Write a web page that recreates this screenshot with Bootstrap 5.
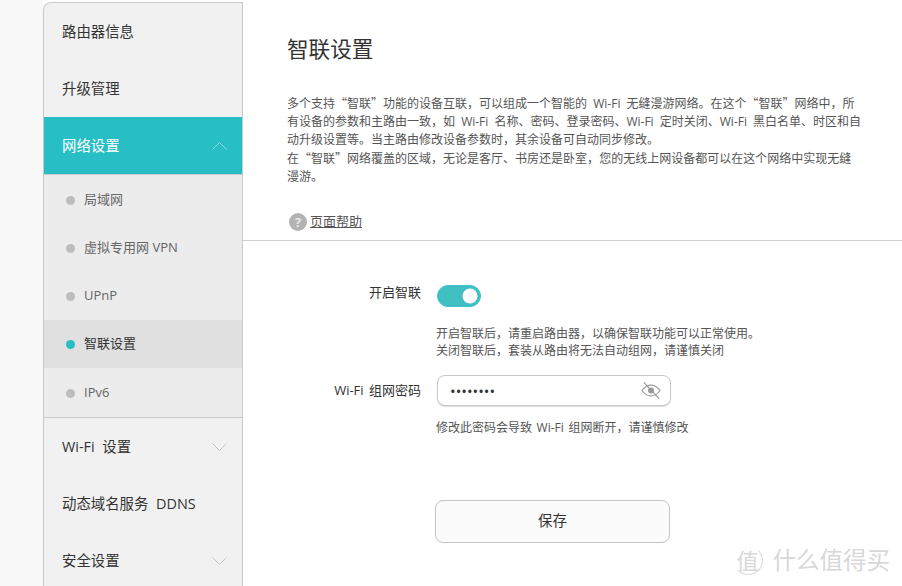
<!DOCTYPE html>
<html lang="zh">
<head>
<meta charset="utf-8">
<title>智联设置</title>
<link rel="stylesheet" href="https://cdn.jsdelivr.net/npm/bootstrap@5.3.0/dist/css/bootstrap.min.css">
<style>
html,body{height:586px;overflow:hidden}
body{background:#fff;font-family:"Open Sans","Noto Sans CJK SC",sans-serif;color:#333;font-size:12px}
.shell{height:586px;padding:2px 0 0 43px;background:linear-gradient(90deg,#f8f8f8 43px,#fff 43px)}
.side{width:200px;flex:none;background:#f1f1f1;border:1px solid #c9c9c9;border-width:1px 1px 0 1px;border-top-left-radius:8px;overflow:hidden}
.top-item{height:57px;flex:none;padding:0 15px 0 18px;font-size:14.4px;color:#333;text-decoration:none;word-spacing:4px}
.top-item.on{background:#28bec6;color:#fff}
.top-item svg{width:15px;height:8px;fill:none;stroke:#c4c4c4;stroke-width:1}
.top-item.on svg{stroke:#83dce0}
.sub-panel{flex:none;background:#ececec;border-top:1px solid #c9c9c9;border-bottom:1px solid #c9c9c9;padding-top:1px;height:244px}
.sub-item{height:48px;padding:0 0 1px 22px;gap:9px;font-size:13px;color:#666;text-decoration:none}
.sub-item:last-child{height:49px;padding-bottom:0}
.sub-item.on{background:#e0e0e0;color:#333}
.pip{width:9px;height:9px;border-radius:50%;background:#bdbdbd;flex:none;margin-top:1px}
.sub-item.on .pip{background:#28bec6}
.main{flex:1;background:#fff;min-width:0}
.head{height:239px;border-bottom:1px solid #cfcfcf;padding:31px 40px 0 44px}
.ttl{font-size:21.6px;font-weight:400;line-height:32px;margin:0 0 30px;color:#333}
.intro{font-size:12px;line-height:18.2px;color:#555;margin:0;width:580px;word-spacing:3px}
.qt{font-family:"Noto Sans CJK SC",sans-serif;line-height:0}
.cm{font-family:"Noto Sans CJK TC",sans-serif;line-height:0}
.helpline{margin-top:26px;gap:3px;color:#555;font-size:13px;margin-left:2px}
.helpline a{color:#555}
.helpdot{width:18px;height:18px;border-radius:50%;background:#b3b3b3;color:#e8e8e8;font-size:13px;line-height:18px;text-align:center;font-weight:700}
.lab{width:178px;flex:none;text-align:right;font-size:13px;color:#333;margin:0;padding:0;word-spacing:2px}
.fld{margin-left:16px}
.sw-row{margin-top:37px;height:30px}
.form-switch.sw-box .form-check-input.sw{width:44px;height:22px;margin:5px 0 0 0;float:none;background-color:#40c0c2;border-color:#40c0c2;box-shadow:none}
.form-switch.sw-box{padding:0;min-height:0;display:flex;margin-bottom:0}
.note{margin-left:193px;font-size:12px;line-height:16.5px;color:#555;word-spacing:1.5px}
.note-a{margin-top:18px}
.note-b{margin-top:14px}
.pw-row{margin-top:16px}
.pw-wrap{width:234px;height:31px}
.pw-wrap .form-control{height:31px;border-radius:8px;border-color:#c9c9c9;padding:0 34px 0 12px;font-size:15px;color:#333;box-shadow:0 1px 1px #ddd}
.pw-eye{position:absolute;right:10px;top:6px;width:20px;height:19px;fill:none;stroke:#999;stroke-width:1.3}
.save-row{margin:63px 0 0 192px}
.save{width:235px;height:43px;background:#fbfbfb;border:1px solid #c4c4c4;border-radius:8px;color:#333;font-size:14.4px;padding:0}
.wmark{position:absolute;right:12px;bottom:11px;color:#d8d8d8;font-size:23.5px;gap:10px;line-height:1}
.wmark-c{width:30px;height:29px;border:1px solid #d8d8d8;border-top-color:transparent;border-left-color:transparent;border-radius:50%;font-size:22px;line-height:27px;text-align:center}
</style>
</head>
<body>
<div class="shell d-flex position-relative">
  <nav class="side d-flex flex-column">
    <a class="top-item d-flex align-items-center" href="#">路由器信息</a>
    <a class="top-item d-flex align-items-center" href="#">升级管理</a>
    <a class="top-item on d-flex align-items-center justify-content-between" href="#">网络设置<svg viewBox="0 0 15 8"><path d="M.5 7.5l7-7 7 7"/></svg></a>
    <div class="sub-panel">
      <a class="sub-item d-flex align-items-center" href="#"><span class="pip"></span>局域网</a>
      <a class="sub-item d-flex align-items-center" href="#"><span class="pip"></span>虚拟专用网 VPN</a>
      <a class="sub-item d-flex align-items-center" href="#"><span class="pip"></span>UPnP</a>
      <a class="sub-item on d-flex align-items-center" href="#"><span class="pip"></span>智联设置</a>
      <a class="sub-item d-flex align-items-center" href="#"><span class="pip"></span>IPv6</a>
    </div>
    <a class="top-item d-flex align-items-center justify-content-between" href="#">Wi-Fi 设置<svg viewBox="0 0 15 8"><path d="M.5.5l7 7 7-7"/></svg></a>
    <a class="top-item d-flex align-items-center" href="#">动态域名服务 DDNS</a>
    <a class="top-item d-flex align-items-center justify-content-between" href="#">安全设置<svg viewBox="0 0 15 8"><path d="M.5.5l7 7 7-7"/></svg></a>
  </nav>
  <main class="main">
    <div class="head">
      <h1 class="ttl">智联设置</h1>
      <p class="intro">多个支持<span class="qt">“</span>智联<span class="qt">”</span>功能的设备互联<span class="cm">，</span>可以组成一个智能的 Wi-Fi 无缝漫游网络。在这个<span class="qt">“</span>智联<span class="qt">”</span>网络中<span class="cm">，</span>所<br>有设备的参数和主路由一致<span class="cm">，</span>如 Wi-Fi 名称、密码、登录密码、Wi-Fi 定时关闭、Wi-Fi 黑白名单、时区和自<br>动升级设置等。当主路由修改设备参数时<span class="cm">，</span>其余设备可自动同步修改。<br>在<span class="qt">“</span>智联<span class="qt">”</span>网络覆盖的区域<span class="cm">，</span>无论是客厅、书房还是卧室<span class="cm">，</span>您的无线上网设备都可以在这个网络中实现无缝<br>漫游。</p>
      <div class="helpline d-flex align-items-center"><span class="helpdot">?</span><a href="#">页面帮助</a></div>
    </div>
    <div class="sw-row d-flex align-items-center">
      <label class="lab" for="sw1">开启智联</label>
      <div class="fld form-check form-switch sw-box"><input class="form-check-input sw" type="checkbox" id="sw1" checked></div>
    </div>
    <div class="note note-a">开启智联后<span class="cm">，</span>请重启路由器<span class="cm">，</span>以确保智联功能可以正常使用。<br>关闭智联后<span class="cm">，</span>套装从路由将无法自动组网<span class="cm">，</span>请谨慎关闭</div>
    <div class="pw-row d-flex align-items-center">
      <label class="lab" for="pw1">Wi-Fi 组网密码</label>
      <div class="fld pw-wrap position-relative">
        <input class="form-control" id="pw1" type="password" value="12345678">
        <svg class="pw-eye" viewBox="0 0 22 20"><path d="M1 10c3-4 6-6 10-6s7 2 10 6c-3 4-6 6-10 6S4 14 1 10Z"/><circle cx="11" cy="10" r="2.6" fill="#999"/><path d="M3 1l17 18"/></svg>
      </div>
    </div>
    <div class="note note-b">修改此密码会导致 Wi-Fi 组网断开<span class="cm">，</span>请谨慎修改</div>
    <div class="save-row"><button class="btn save" type="button">保存</button></div>
  </main>
  <div class="wmark d-flex align-items-center"><span class="wmark-c">值</span><span>什么值得买</span></div>
</div>
<script src="https://cdn.jsdelivr.net/npm/bootstrap@5.3.0/dist/js/bootstrap.bundle.min.js"></script>
</body>
</html>
